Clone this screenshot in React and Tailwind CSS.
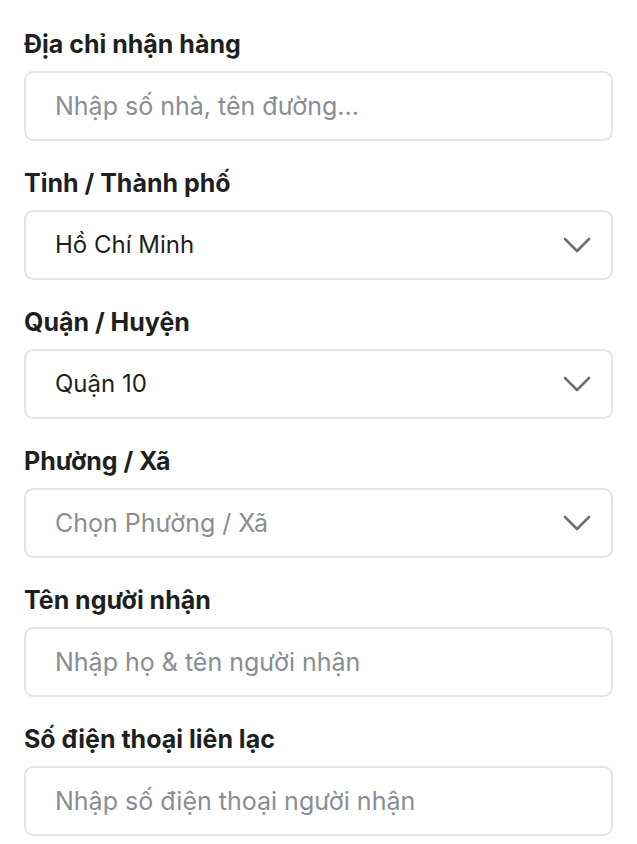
const fields = [
  { label: "Địa chỉ nhận hàng", placeholder: "Nhập số nhà, tên đường..." },
  { label: "Tỉnh / Thành phố", value: "Hồ Chí Minh", select: true },
  { label: "Quận / Huyện", value: "Quận 10", select: true },
  { label: "Phường / Xã", placeholder: "Chọn Phường / Xã", select: true },
  { label: "Tên người nhận", placeholder: "Nhập họ & tên người nhận" },
  { label: "Số điện thoại liên lạc", placeholder: "Nhập số điện thoại người nhận" },
];

function Chevron() {
  return (
    <svg width="28" height="16" viewBox="0 0 28 16" fill="none" className="shrink-0">
      <path
        d="M2 2l12 12L26 2"
        stroke="#6b6f76"
        strokeWidth="2.6"
        strokeLinecap="round"
        strokeLinejoin="round"
      />
    </svg>
  );
}

function Field({ label, placeholder, value, select }) {
  return (
    <div className="flex flex-col gap-3">
      <label className="text-[25px] leading-[30px] font-bold text-[#1f1f21]">
        {label}
      </label>
      <div className="flex h-[70px] items-center justify-between rounded-[9px] border-2 border-[#e4e4e7] bg-white pl-[29px] pr-[20px]">
        <span
          className={
            value
              ? "text-[24px] leading-[30px] text-[#1f1f21]"
              : "text-[25px] leading-[30px] text-[#8a8d93]"
          }
        >
          {value || placeholder}
        </span>
        {select && <Chevron />}
      </div>
    </div>
  );
}

export default function App() {
  return (
    <div
      className="min-h-screen bg-white px-6 pt-[29px]"
      style={{ fontFamily: "Inter, 'Noto Sans', sans-serif" }}
    >
      <div className="flex flex-col gap-[27px]">
        {fields.map((f) => (
          <Field key={f.label} {...f} />
        ))}
      </div>
    </div>
  );
}
